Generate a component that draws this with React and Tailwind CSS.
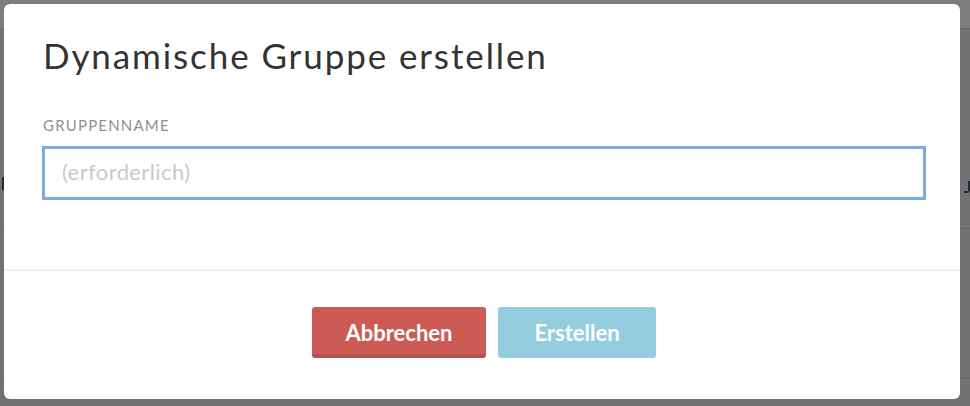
import React from 'react';

const font = { fontFamily: 'Lato, "Open Sans", sans-serif' };

const App = () => {
  return (
    <div className="relative w-[970px] h-[406px] overflow-hidden bg-[#727272]" style={font}>
      {/* dimmed page behind the dialog */}
      <div className="h-[29px] bg-[#7d7d7d] border-b border-[#6a6a6a]"></div>
      <div className="h-[200px] border-b border-[#666666] flex items-start justify-between pt-[148px]">
        <div className="w-[2px] h-[13px] bg-[#2e2e1e] ml-[2px]"></div>
        <div className="w-[6px] h-[12px] border-r-[2px] border-b-[2px] border-[#1e2a30] mt-[4px] rounded-br-[3px]"></div>
      </div>
      <div className="h-[150px] border-b border-[#666666]"></div>

      {/* dialog */}
      <div className="absolute left-[4px] top-[4px] w-[956px] h-[395px] bg-white rounded-[6px] flex flex-col">
        <div className="px-[39px] pt-[30px]">
          <h1 className="text-[35px] leading-[42px] text-[#333333] font-normal tracking-[1.9px]">
            Dynamische Gruppe erstellen
          </h1>
          <div className="mt-[40px] text-[15px] leading-[18px] tracking-[1.2px] text-[#8b9295] uppercase">
            Gruppenname
          </div>
          <div className="mt-[12px] w-[884px] -ml-[1px] h-[54px] border-[3px] border-[#7aaee3] flex items-center pl-[17px] pb-[4px]">
            <span className="text-[22px] tracking-[0.4px] text-[#c9c9c9]">(erforderlich)</span>
          </div>
        </div>
        <div className="mt-[69px] h-[2px] bg-[#f1f1f1]"></div>
        <div className="flex justify-center gap-[12px] pt-[36px] pl-[4px]">
          <button className="w-[174px] h-[51px] rounded-[3px] bg-[#cc5b55] border-b-[4px] border-[#b3514c] text-white text-[22px] font-bold pt-[3px]">
            Abbrechen
          </button>
          <button className="w-[158px] h-[51px] rounded-[3px] bg-[#94cddd] text-white text-[22px] font-bold">
            Erstellen
          </button>
        </div>
      </div>
    </div>
  );
};

export default App;
